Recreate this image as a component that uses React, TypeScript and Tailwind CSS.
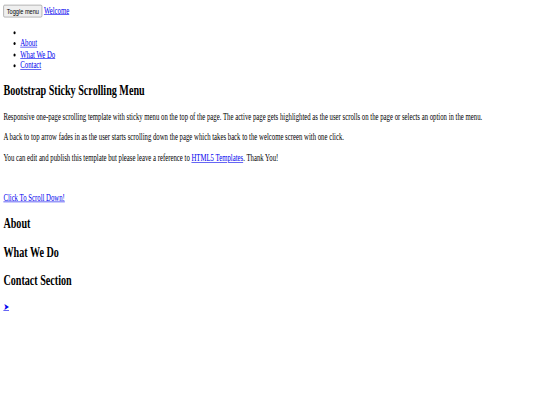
import React from 'react';

const link = 'text-[#0000ee] underline';

export default function App() {
  return (
    <div className="w-[540px] h-[405px] overflow-hidden bg-white">
      {/* page drawn at 1280x675 and squeezed into the frame like the reference */}
      <div className="w-[1280px] h-[675px] origin-top-left scale-x-[0.421875] scale-y-[0.6] p-2 font-['Liberation_Serif','Times_New_Roman',serif] text-[16px] leading-[1.15] text-black">
        <nav>
          <div>
            <button className="bg-[#efefef] border border-[#767676] rounded-[3px] px-[7px] py-[2px] font-['Liberation_Sans',Arial,sans-serif] text-[13.333px] leading-[normal] text-black">
              Toggle menu
            </button>{' '}
            <a href="#" className={link}>Welcome</a>
          </div>
          <ul className="my-4 pl-10 list-disc">
            <li></li>
            <li><a href="#" className={link}>About</a></li>
            <li><a href="#" className={link}>What We Do</a></li>
            <li><a href="#" className={link}>Contact</a></li>
          </ul>
        </nav>

        <section>
          <h2 className="my-[19.92px] text-[24px] font-bold">Bootstrap Sticky Scrolling Menu</h2>
          <p className="my-4">
            Responsive one-page scrolling template with sticky menu on the top of the page. The active page gets highlighted as the user scrolls on the page or selects an option in the menu.
          </p>
          <p className="my-4">
            A back to top arrow fades in as the user starts scrolling down the page which takes back to the welcome screen with one click.
          </p>
          <p className="my-4">
            You can edit and publish this template but please leave a reference to{' '}
            <a href="#" className={link}>HTML5 Templates</a>. Thank You!
          </p>
          <div className="pt-[32px]">
            <a href="#" className={link}>Click To Scroll Down!</a>
          </div>
        </section>

        <section>
          <h2 className="my-[19.92px] text-[24px] font-bold">About</h2>
        </section>
        <section>
          <h2 className="my-[19.92px] text-[24px] font-bold">What We Do</h2>
        </section>
        <section>
          <h2 className="my-[19.92px] text-[24px] font-bold">Contact Section</h2>
        </section>

        <a href="#" className={`${link} font-['DejaVu_Sans',sans-serif]`}>➤</a>
      </div>
    </div>
  );
}
